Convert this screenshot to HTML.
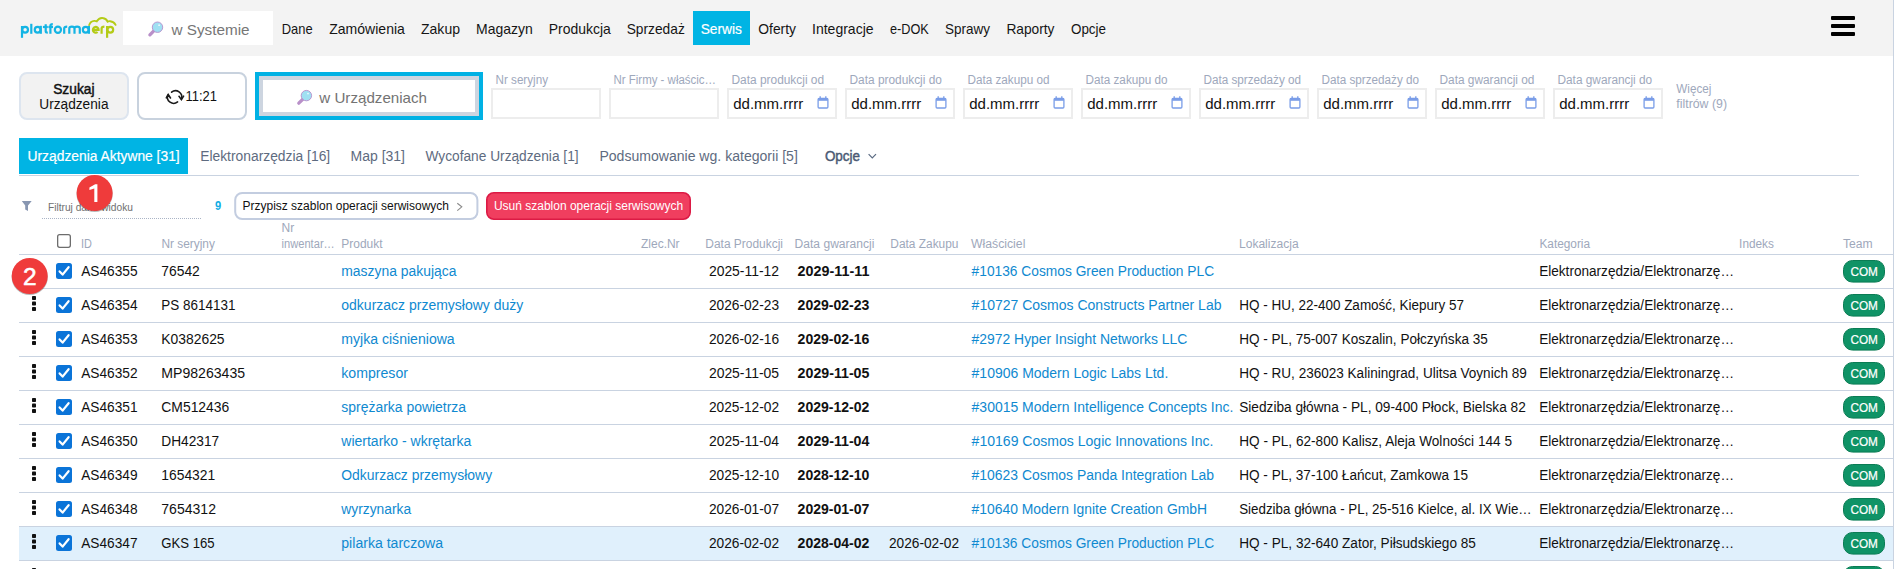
<!DOCTYPE html>
<html><head><meta charset="utf-8"><title>Serwis</title>
<style>html,body{margin:0;padding:0;background:#fff;overflow:hidden}svg{display:block}text{white-space:pre}</style>
</head><body><svg width="1894" height="569" viewBox="0 0 1894 569" font-family="'Liberation Sans', sans-serif"><rect x="0" y="0" width="1894" height="56" fill="#f3f3f3"/>
<g fill="none" stroke-width="2.2" stroke-linecap="butt"><g stroke="#14b4e4"><line x1="22" y1="26" x2="22" y2="37.8"/><circle cx="25.1" cy="29.8" r="2.85"/><line x1="31.3" y1="23.8" x2="31.3" y2="33.8"/><circle cx="37.6" cy="29.8" r="2.85"/><line x1="40.8" y1="25.8" x2="40.8" y2="33.8"/><path d="M45.7 24.2 V31.2 Q45.7 32.6 47.8 32.6"/><line x1="42.9" y1="27" x2="47.8" y2="27"/><path d="M50.4 33.8 V25.8 Q50.4 24.1 52.8 24.1"/><line x1="48.4" y1="27" x2="53" y2="27"/><circle cx="57.9" cy="29.8" r="3.1"/><path d="M64.2 33.8 V28.6 Q64.2 26.6 67.2 26.6"/><path d="M69.3 33.8 V28.4 Q69.3 26.6 71.9 26.6 Q74.5 26.6 74.5 28.4 V33.8 M74.5 28.4 Q74.5 26.6 77.1 26.6 Q79.8 26.6 79.8 28.4 V33.8"/><circle cx="85.7" cy="29.8" r="2.85"/><line x1="88.9" y1="25.8" x2="88.9" y2="33.8"/></g><g stroke="#b4cb16"><path d="M93 29.8 H98.6 A2.85 2.85 0 1 0 97.6 32"/><path d="M101.6 33.8 V28.6 Q101.6 26.6 104.4 26.6"/><line x1="107.1" y1="26" x2="107.1" y2="37.8"/><circle cx="110.3" cy="29.8" r="2.85"/><path d="M89.2 25 Q90.6 21.2 94.2 20.9 Q95.6 20.8 96.8 21.3 Q99 17.6 102.6 18 Q106.3 18.3 107.6 21.6 Q108.6 21 110.2 21.2 Q114 21.6 115.6 24.8" stroke-width="1.9" stroke-linecap="round"/></g></g>
<rect x="123" y="11" width="150" height="34" fill="#ffffff"/>
<line x1="154.3" y1="30.4" x2="149.9" y2="34.8" stroke="#b990c9" stroke-width="3.3" stroke-linecap="round"/>
<circle cx="157.5" cy="27.2" r="5.2" fill="#9fe0f2" stroke="#b58ccb" stroke-width="0.9"/>
<circle cx="159.1" cy="25.2" r="0.9" fill="#ffffff" opacity="0.8"/>
<text x="171.5" y="35" font-size="15" fill="#767676" textLength="78.1" lengthAdjust="spacingAndGlyphs">w Systemie</text>
<text x="281.7" y="34" font-size="15" fill="#151515" textLength="30.9" lengthAdjust="spacingAndGlyphs">Dane</text>
<text x="329.2" y="34" font-size="15" fill="#151515" textLength="75.7" lengthAdjust="spacingAndGlyphs">Zamówienia</text>
<text x="421" y="34" font-size="15" fill="#151515" textLength="39" lengthAdjust="spacingAndGlyphs">Zakup</text>
<text x="476" y="34" font-size="15" fill="#151515" textLength="56.7" lengthAdjust="spacingAndGlyphs">Magazyn</text>
<text x="548.7" y="34" font-size="15" fill="#151515" textLength="62.1" lengthAdjust="spacingAndGlyphs">Produkcja</text>
<text x="626.7" y="34" font-size="15" fill="#151515" textLength="58.1" lengthAdjust="spacingAndGlyphs">Sprzedaż</text>
<rect x="693" y="11" width="57" height="34" fill="#00b4e4"/>
<text x="700.7" y="34" font-size="15" fill="#ffffff" textLength="41.3" lengthAdjust="spacingAndGlyphs" stroke="#ffffff" stroke-width="0.2">Serwis</text>
<text x="758.3" y="34" font-size="15" fill="#151515" textLength="37.7" lengthAdjust="spacingAndGlyphs">Oferty</text>
<text x="812" y="34" font-size="15" fill="#151515" textLength="61.6" lengthAdjust="spacingAndGlyphs">Integracje</text>
<text x="890" y="34" font-size="15" fill="#151515" textLength="38.8" lengthAdjust="spacingAndGlyphs">e-DOK</text>
<text x="945" y="34" font-size="15" fill="#151515" textLength="45" lengthAdjust="spacingAndGlyphs">Sprawy</text>
<text x="1006.4" y="34" font-size="15" fill="#151515" textLength="48.1" lengthAdjust="spacingAndGlyphs">Raporty</text>
<text x="1071" y="34" font-size="15" fill="#151515" textLength="35" lengthAdjust="spacingAndGlyphs">Opcje</text>
<rect x="1831" y="16" width="24" height="4" fill="#000000" rx="1"/>
<rect x="1831" y="24" width="24" height="4" fill="#000000" rx="1"/>
<rect x="1831" y="32" width="24" height="4" fill="#000000" rx="1"/>
<rect x="20" y="73" width="108" height="46" fill="#f2f2f2" stroke="#dde5ef" stroke-width="2" rx="7"/>
<text x="53.2" y="94.3" font-size="14" fill="#111" textLength="41.3" lengthAdjust="spacingAndGlyphs" stroke="#111" stroke-width="0.45">Szukaj</text>
<text x="39.3" y="109" font-size="14" fill="#111" textLength="69.2" lengthAdjust="spacingAndGlyphs">Urządzenia</text>
<rect x="138" y="73" width="108" height="46" fill="#ffffff" stroke="#c8d2de" stroke-width="2" rx="7"/>
<g fill="none" stroke="#1a1a1a" stroke-width="1.6" stroke-linecap="round"><path d="M171.6 92.2 A6.2 6.2 0 0 1 181.4 99"/><path d="M177.6 101.9 A6.2 6.2 0 0 1 167.8 95"/><path d="M179 96.3 L181.4 99.6 L183.6 96.1"/><path d="M166.3 97.8 L168.2 94.6 L170.5 98"/></g>
<text x="185.5" y="101" font-size="14" fill="#111" textLength="31.4" lengthAdjust="spacingAndGlyphs">11:21</text>
<rect x="257" y="74" width="224" height="44" fill="#ffffff" stroke="#00b1e4" stroke-width="4"/>
<rect x="261" y="78" width="216" height="36" fill="none" stroke="#cdd5e0" stroke-width="4"/>
<line x1="303.2" y1="98.8" x2="298.79999999999995" y2="103.19999999999999" stroke="#b990c9" stroke-width="3.3" stroke-linecap="round"/>
<circle cx="306.4" cy="95.6" r="5.2" fill="#9fe0f2" stroke="#b58ccb" stroke-width="0.9"/>
<circle cx="308.0" cy="93.6" r="0.9" fill="#ffffff" opacity="0.8"/>
<text x="319.3" y="102.6" font-size="15" fill="#737373" textLength="107.7" lengthAdjust="spacingAndGlyphs">w Urządzeniach</text>
<text x="495.5" y="84" font-size="12.3" fill="#9ea8bc" textLength="52.5" lengthAdjust="spacingAndGlyphs">Nr seryjny</text>
<rect x="492" y="89" width="108" height="29" fill="#ffffff" stroke="#ededed" stroke-width="2"/>
<text x="613.5" y="84" font-size="12.3" fill="#9ea8bc" textLength="102.5" lengthAdjust="spacingAndGlyphs">Nr Firmy - właścic…</text>
<rect x="610" y="89" width="108" height="29" fill="#ffffff" stroke="#ededed" stroke-width="2"/>
<text x="731.5" y="84" font-size="12.3" fill="#9ea8bc" textLength="92.6" lengthAdjust="spacingAndGlyphs">Data produkcji od</text>
<rect x="728" y="89" width="108" height="29" fill="#ffffff" stroke="#ededed" stroke-width="2"/>
<text x="733.2" y="108.7" font-size="15" fill="#111" textLength="70.1" lengthAdjust="spacingAndGlyphs">dd.mm.rrrr</text>
<g fill="none" stroke="#7a9de8"><rect x="818.1" y="98.4" width="9.8" height="9.6" rx="1" stroke-width="1.3"/><line x1="818.1999999999999" y1="99.6" x2="827.8" y2="99.6" stroke-width="2.4"/><line x1="820.1999999999999" y1="96.2" x2="820.1999999999999" y2="98.4" stroke-width="1.3"/><line x1="825.8" y1="96.2" x2="825.8" y2="98.4" stroke-width="1.3"/></g>
<text x="849.5" y="84" font-size="12.3" fill="#9ea8bc" textLength="92.4" lengthAdjust="spacingAndGlyphs">Data produkcji do</text>
<rect x="846" y="89" width="108" height="29" fill="#ffffff" stroke="#ededed" stroke-width="2"/>
<text x="851.2" y="108.7" font-size="15" fill="#111" textLength="70.1" lengthAdjust="spacingAndGlyphs">dd.mm.rrrr</text>
<g fill="none" stroke="#7a9de8"><rect x="936.1" y="98.4" width="9.8" height="9.6" rx="1" stroke-width="1.3"/><line x1="936.1999999999999" y1="99.6" x2="945.8" y2="99.6" stroke-width="2.4"/><line x1="938.1999999999999" y1="96.2" x2="938.1999999999999" y2="98.4" stroke-width="1.3"/><line x1="943.8" y1="96.2" x2="943.8" y2="98.4" stroke-width="1.3"/></g>
<text x="967.5" y="84" font-size="12.3" fill="#9ea8bc" textLength="82.0" lengthAdjust="spacingAndGlyphs">Data zakupu od</text>
<rect x="964" y="89" width="108" height="29" fill="#ffffff" stroke="#ededed" stroke-width="2"/>
<text x="969.2" y="108.7" font-size="15" fill="#111" textLength="70.1" lengthAdjust="spacingAndGlyphs">dd.mm.rrrr</text>
<g fill="none" stroke="#7a9de8"><rect x="1054.1000000000001" y="98.4" width="9.8" height="9.6" rx="1" stroke-width="1.3"/><line x1="1054.2" y1="99.6" x2="1063.8000000000002" y2="99.6" stroke-width="2.4"/><line x1="1056.2" y1="96.2" x2="1056.2" y2="98.4" stroke-width="1.3"/><line x1="1061.8000000000002" y1="96.2" x2="1061.8000000000002" y2="98.4" stroke-width="1.3"/></g>
<text x="1085.5" y="84" font-size="12.3" fill="#9ea8bc" textLength="82.1" lengthAdjust="spacingAndGlyphs">Data zakupu do</text>
<rect x="1082" y="89" width="108" height="29" fill="#ffffff" stroke="#ededed" stroke-width="2"/>
<text x="1087.2" y="108.7" font-size="15" fill="#111" textLength="70.1" lengthAdjust="spacingAndGlyphs">dd.mm.rrrr</text>
<g fill="none" stroke="#7a9de8"><rect x="1172.1000000000001" y="98.4" width="9.8" height="9.6" rx="1" stroke-width="1.3"/><line x1="1172.2" y1="99.6" x2="1181.8000000000002" y2="99.6" stroke-width="2.4"/><line x1="1174.2" y1="96.2" x2="1174.2" y2="98.4" stroke-width="1.3"/><line x1="1179.8000000000002" y1="96.2" x2="1179.8000000000002" y2="98.4" stroke-width="1.3"/></g>
<text x="1203.5" y="84" font-size="12.3" fill="#9ea8bc" textLength="97.6" lengthAdjust="spacingAndGlyphs">Data sprzedaży od</text>
<rect x="1200" y="89" width="108" height="29" fill="#ffffff" stroke="#ededed" stroke-width="2"/>
<text x="1205.2" y="108.7" font-size="15" fill="#111" textLength="70.1" lengthAdjust="spacingAndGlyphs">dd.mm.rrrr</text>
<g fill="none" stroke="#7a9de8"><rect x="1290.1000000000001" y="98.4" width="9.8" height="9.6" rx="1" stroke-width="1.3"/><line x1="1290.2" y1="99.6" x2="1299.8000000000002" y2="99.6" stroke-width="2.4"/><line x1="1292.2" y1="96.2" x2="1292.2" y2="98.4" stroke-width="1.3"/><line x1="1297.8000000000002" y1="96.2" x2="1297.8000000000002" y2="98.4" stroke-width="1.3"/></g>
<text x="1321.5" y="84" font-size="12.3" fill="#9ea8bc" textLength="97.5" lengthAdjust="spacingAndGlyphs">Data sprzedaży do</text>
<rect x="1318" y="89" width="108" height="29" fill="#ffffff" stroke="#ededed" stroke-width="2"/>
<text x="1323.2" y="108.7" font-size="15" fill="#111" textLength="70.1" lengthAdjust="spacingAndGlyphs">dd.mm.rrrr</text>
<g fill="none" stroke="#7a9de8"><rect x="1408.1000000000001" y="98.4" width="9.8" height="9.6" rx="1" stroke-width="1.3"/><line x1="1408.2" y1="99.6" x2="1417.8000000000002" y2="99.6" stroke-width="2.4"/><line x1="1410.2" y1="96.2" x2="1410.2" y2="98.4" stroke-width="1.3"/><line x1="1415.8000000000002" y1="96.2" x2="1415.8000000000002" y2="98.4" stroke-width="1.3"/></g>
<text x="1439.5" y="84" font-size="12.3" fill="#9ea8bc" textLength="94.9" lengthAdjust="spacingAndGlyphs">Data gwarancji od</text>
<rect x="1436" y="89" width="108" height="29" fill="#ffffff" stroke="#ededed" stroke-width="2"/>
<text x="1441.2" y="108.7" font-size="15" fill="#111" textLength="70.1" lengthAdjust="spacingAndGlyphs">dd.mm.rrrr</text>
<g fill="none" stroke="#7a9de8"><rect x="1526.1000000000001" y="98.4" width="9.8" height="9.6" rx="1" stroke-width="1.3"/><line x1="1526.2" y1="99.6" x2="1535.8000000000002" y2="99.6" stroke-width="2.4"/><line x1="1528.2" y1="96.2" x2="1528.2" y2="98.4" stroke-width="1.3"/><line x1="1533.8000000000002" y1="96.2" x2="1533.8000000000002" y2="98.4" stroke-width="1.3"/></g>
<text x="1557.5" y="84" font-size="12.3" fill="#9ea8bc" textLength="94.7" lengthAdjust="spacingAndGlyphs">Data gwarancji do</text>
<rect x="1554" y="89" width="108" height="29" fill="#ffffff" stroke="#ededed" stroke-width="2"/>
<text x="1559.2" y="108.7" font-size="15" fill="#111" textLength="70.1" lengthAdjust="spacingAndGlyphs">dd.mm.rrrr</text>
<g fill="none" stroke="#7a9de8"><rect x="1644.1000000000001" y="98.4" width="9.8" height="9.6" rx="1" stroke-width="1.3"/><line x1="1644.2" y1="99.6" x2="1653.8000000000002" y2="99.6" stroke-width="2.4"/><line x1="1646.2" y1="96.2" x2="1646.2" y2="98.4" stroke-width="1.3"/><line x1="1651.8000000000002" y1="96.2" x2="1651.8000000000002" y2="98.4" stroke-width="1.3"/></g>
<text x="1676.3" y="92.5" font-size="12.3" fill="#9ea8bc" textLength="35.0" lengthAdjust="spacingAndGlyphs">Więcej</text>
<text x="1676.3" y="107.7" font-size="12.3" fill="#9ea8bc" textLength="50.7" lengthAdjust="spacingAndGlyphs">filtrów (9)</text>
<rect x="19" y="138" width="169" height="36" fill="#00b4e4"/>
<text x="27.5" y="161" font-size="14" fill="#ffffff" textLength="152.2" lengthAdjust="spacingAndGlyphs" stroke="#ffffff" stroke-width="0.2">Urządzenia Aktywne [31]</text>
<text x="200.2" y="161" font-size="14" fill="#5e6b80" textLength="130.0" lengthAdjust="spacingAndGlyphs">Elektronarzędzia [16]</text>
<text x="350.5" y="161" font-size="14" fill="#5e6b80" textLength="54.5" lengthAdjust="spacingAndGlyphs">Map [31]</text>
<text x="425.5" y="161" font-size="14" fill="#5e6b80" textLength="153.1" lengthAdjust="spacingAndGlyphs">Wycofane Urządzenia [1]</text>
<text x="599.4" y="161" font-size="14" fill="#5e6b80" textLength="198.4" lengthAdjust="spacingAndGlyphs">Podsumowanie wg. kategorii [5]</text>
<text x="824.9" y="161" font-size="14" fill="#4a5a74" textLength="35.1" lengthAdjust="spacingAndGlyphs" stroke="#4a5a74" stroke-width="0.45">Opcje</text>
<path d="M868.6 154.2 L872.3 158 L876 154.2" fill="none" stroke="#5a6a82" stroke-width="1.2"/>
<rect x="19" y="175" width="1840" height="1" fill="#c9d3e1"/>
<path d="M21.8 201 L31.7 201 L28 205.5 L28 211 L25.2 209.5 L25.2 205.5 Z" fill="#8897b2"/>
<text x="47.9" y="211" font-size="10" fill="#707070" textLength="85.1" lengthAdjust="spacingAndGlyphs">Filtruj dane widoku</text>
<line x1="42" y1="218.5" x2="201" y2="218.5" stroke="#aab4c6" stroke-width="1" stroke-dasharray="1 1"/>
<text x="215" y="210" font-size="12.5" fill="#12ade4" font-weight="700" textLength="6.2" lengthAdjust="spacingAndGlyphs">9</text>
<rect x="235.2" y="193" width="242.2" height="26" fill="#ffffff" stroke="#c3cde0" stroke-width="2" rx="7"/>
<text x="242.5" y="210" font-size="12.5" fill="#111" textLength="206.5" lengthAdjust="spacingAndGlyphs">Przypisz szablon operacji serwisowych</text>
<path d="M457.3 203.2 L461.8 206.8 L457.3 210.6" fill="none" stroke="#8a8a8a" stroke-width="1.1"/>
<rect x="486.8" y="192.8" width="203.4" height="26.4" fill="#f03e5f" stroke="#dc1a45" stroke-width="1.6" rx="7"/>
<text x="493.9" y="210" font-size="12.5" fill="#ffffff" textLength="189.3" lengthAdjust="spacingAndGlyphs">Usuń szablon operacji serwisowych</text>
<rect x="57.65" y="234.65" width="12.7" height="12.7" fill="#ffffff" stroke="#6d6d6d" stroke-width="1.3" rx="2"/>
<text x="81.1" y="248" font-size="12" fill="#9ea8bb" textLength="10.9" lengthAdjust="spacingAndGlyphs">ID</text>
<text x="161.4" y="248" font-size="12" fill="#9ea8bb" textLength="53.5" lengthAdjust="spacingAndGlyphs">Nr seryjny</text>
<text x="281.6" y="248" font-size="12" fill="#9ea8bb" textLength="53.1" lengthAdjust="spacingAndGlyphs">inwentar…</text>
<text x="341.3" y="248" font-size="12" fill="#9ea8bb" textLength="41.3" lengthAdjust="spacingAndGlyphs">Produkt</text>
<text x="641" y="248" font-size="12" fill="#9ea8bb" textLength="38.6" lengthAdjust="spacingAndGlyphs">Zlec.Nr</text>
<text x="705.3" y="248" font-size="12" fill="#9ea8bb" textLength="77.7" lengthAdjust="spacingAndGlyphs">Data Produkcji</text>
<text x="794.6" y="248" font-size="12" fill="#9ea8bb" textLength="79.8" lengthAdjust="spacingAndGlyphs">Data gwarancji</text>
<text x="890.3" y="248" font-size="12" fill="#9ea8bb" textLength="68.2" lengthAdjust="spacingAndGlyphs">Data Zakupu</text>
<text x="970.9" y="248" font-size="12" fill="#9ea8bb" textLength="54.5" lengthAdjust="spacingAndGlyphs">Właściciel</text>
<text x="1239" y="248" font-size="12" fill="#9ea8bb" textLength="59.6" lengthAdjust="spacingAndGlyphs">Lokalizacja</text>
<text x="1539.4" y="248" font-size="12" fill="#9ea8bb" textLength="50.7" lengthAdjust="spacingAndGlyphs">Kategoria</text>
<text x="1739.1" y="248" font-size="12" fill="#9ea8bb" textLength="34.8" lengthAdjust="spacingAndGlyphs">Indeks</text>
<text x="1843" y="248" font-size="12" fill="#9ea8bb" textLength="29.7" lengthAdjust="spacingAndGlyphs">Team</text>
<text x="281.6" y="232" font-size="12" fill="#9ea8bb">Nr</text>
<rect x="19" y="254" width="1874" height="1" fill="#c9d3e1"/>
<rect x="56" y="263" width="16" height="16" fill="#0b74d8" rx="2.5"/>
<path d="M59.6 271.4 L62.6 274.6 L68.6 267.2" fill="none" stroke="#ffffff" stroke-width="2.2" stroke-linecap="round" stroke-linejoin="round"/>
<text x="81.2" y="276" font-size="14" fill="#111" textLength="56.4" lengthAdjust="spacingAndGlyphs">AS46355</text>
<text x="161.3" y="276" font-size="14" fill="#111" textLength="38.5" lengthAdjust="spacingAndGlyphs">76542</text>
<text x="341.3" y="276" font-size="14" fill="#0f89d0" textLength="115.1" lengthAdjust="spacingAndGlyphs">maszyna pakująca</text>
<text x="708.9" y="276" font-size="14" fill="#111" textLength="70.2" lengthAdjust="spacingAndGlyphs">2025-11-12</text>
<text x="797.6" y="276" font-size="14" fill="#111" font-weight="700" textLength="71.8" lengthAdjust="spacingAndGlyphs">2029-11-11</text>
<text x="971.6" y="276" font-size="14" fill="#0f89d0" textLength="242.5" lengthAdjust="spacingAndGlyphs">#10136 Cosmos Green Production PLC</text>
<text x="1539.2" y="276" font-size="14" fill="#111" textLength="194.8" lengthAdjust="spacingAndGlyphs">Elektronarzędzia/Elektronarzę…</text>
<rect x="1843.5" y="260.5" width="41" height="21.6" fill="#0f9366" stroke="#0a7c54" stroke-width="1" rx="9"/>
<text x="1850.4" y="276" font-size="13" fill="#ffffff" textLength="27.5" lengthAdjust="spacingAndGlyphs" stroke="#ffffff" stroke-width="0.2">COM</text>
<rect x="19" y="288" width="1874" height="1" fill="#c9d3e1"/>
<rect x="32" y="296" width="4" height="4" fill="#111" rx="0.8"/>
<rect x="32" y="301.5" width="4" height="4" fill="#111" rx="0.8"/>
<rect x="32" y="307" width="4" height="4" fill="#111" rx="0.8"/>
<rect x="56" y="297" width="16" height="16" fill="#0b74d8" rx="2.5"/>
<path d="M59.6 305.4 L62.6 308.6 L68.6 301.2" fill="none" stroke="#ffffff" stroke-width="2.2" stroke-linecap="round" stroke-linejoin="round"/>
<text x="81.2" y="310" font-size="14" fill="#111" textLength="56.4" lengthAdjust="spacingAndGlyphs">AS46354</text>
<text x="161.3" y="310" font-size="14" fill="#111" textLength="74.1" lengthAdjust="spacingAndGlyphs">PS 8614131</text>
<text x="341.3" y="310" font-size="14" fill="#0f89d0" textLength="182.0" lengthAdjust="spacingAndGlyphs">odkurzacz przemysłowy duży</text>
<text x="708.9" y="310" font-size="14" fill="#111" textLength="70.2" lengthAdjust="spacingAndGlyphs">2026-02-23</text>
<text x="797.6" y="310" font-size="14" fill="#111" font-weight="700" textLength="71.8" lengthAdjust="spacingAndGlyphs">2029-02-23</text>
<text x="971.6" y="310" font-size="14" fill="#0f89d0" textLength="249.9" lengthAdjust="spacingAndGlyphs">#10727 Cosmos Constructs Partner Lab</text>
<text x="1239.2" y="310" font-size="14" fill="#111" textLength="224.9" lengthAdjust="spacingAndGlyphs">HQ - HU, 22-400 Zamość, Kiepury 57</text>
<text x="1539.2" y="310" font-size="14" fill="#111" textLength="194.8" lengthAdjust="spacingAndGlyphs">Elektronarzędzia/Elektronarzę…</text>
<rect x="1843.5" y="294.5" width="41" height="21.6" fill="#0f9366" stroke="#0a7c54" stroke-width="1" rx="9"/>
<text x="1850.4" y="310" font-size="13" fill="#ffffff" textLength="27.5" lengthAdjust="spacingAndGlyphs" stroke="#ffffff" stroke-width="0.2">COM</text>
<rect x="19" y="322" width="1874" height="1" fill="#c9d3e1"/>
<rect x="32" y="330" width="4" height="4" fill="#111" rx="0.8"/>
<rect x="32" y="335.5" width="4" height="4" fill="#111" rx="0.8"/>
<rect x="32" y="341" width="4" height="4" fill="#111" rx="0.8"/>
<rect x="56" y="331" width="16" height="16" fill="#0b74d8" rx="2.5"/>
<path d="M59.6 339.4 L62.6 342.6 L68.6 335.2" fill="none" stroke="#ffffff" stroke-width="2.2" stroke-linecap="round" stroke-linejoin="round"/>
<text x="81.2" y="344" font-size="14" fill="#111" textLength="56.4" lengthAdjust="spacingAndGlyphs">AS46353</text>
<text x="161.3" y="344" font-size="14" fill="#111" textLength="63.3" lengthAdjust="spacingAndGlyphs">K0382625</text>
<text x="341.3" y="344" font-size="14" fill="#0f89d0" textLength="113.4" lengthAdjust="spacingAndGlyphs">myjka ciśnieniowa</text>
<text x="708.9" y="344" font-size="14" fill="#111" textLength="70.2" lengthAdjust="spacingAndGlyphs">2026-02-16</text>
<text x="797.6" y="344" font-size="14" fill="#111" font-weight="700" textLength="71.8" lengthAdjust="spacingAndGlyphs">2029-02-16</text>
<text x="971.6" y="344" font-size="14" fill="#0f89d0" textLength="215.6" lengthAdjust="spacingAndGlyphs">#2972 Hyper Insight Networks LLC</text>
<text x="1239.2" y="344" font-size="14" fill="#111" textLength="248.6" lengthAdjust="spacingAndGlyphs">HQ - PL, 75-007 Koszalin, Połczyńska 35</text>
<text x="1539.2" y="344" font-size="14" fill="#111" textLength="194.8" lengthAdjust="spacingAndGlyphs">Elektronarzędzia/Elektronarzę…</text>
<rect x="1843.5" y="328.5" width="41" height="21.6" fill="#0f9366" stroke="#0a7c54" stroke-width="1" rx="9"/>
<text x="1850.4" y="344" font-size="13" fill="#ffffff" textLength="27.5" lengthAdjust="spacingAndGlyphs" stroke="#ffffff" stroke-width="0.2">COM</text>
<rect x="19" y="356" width="1874" height="1" fill="#c9d3e1"/>
<rect x="32" y="364" width="4" height="4" fill="#111" rx="0.8"/>
<rect x="32" y="369.5" width="4" height="4" fill="#111" rx="0.8"/>
<rect x="32" y="375" width="4" height="4" fill="#111" rx="0.8"/>
<rect x="56" y="365" width="16" height="16" fill="#0b74d8" rx="2.5"/>
<path d="M59.6 373.4 L62.6 376.6 L68.6 369.2" fill="none" stroke="#ffffff" stroke-width="2.2" stroke-linecap="round" stroke-linejoin="round"/>
<text x="81.2" y="378" font-size="14" fill="#111" textLength="56.4" lengthAdjust="spacingAndGlyphs">AS46352</text>
<text x="161.3" y="378" font-size="14" fill="#111" textLength="83.8" lengthAdjust="spacingAndGlyphs">MP98263435</text>
<text x="341.3" y="378" font-size="14" fill="#0f89d0" textLength="66.7" lengthAdjust="spacingAndGlyphs">kompresor</text>
<text x="708.9" y="378" font-size="14" fill="#111" textLength="70.2" lengthAdjust="spacingAndGlyphs">2025-11-05</text>
<text x="797.6" y="378" font-size="14" fill="#111" font-weight="700" textLength="71.8" lengthAdjust="spacingAndGlyphs">2029-11-05</text>
<text x="971.6" y="378" font-size="14" fill="#0f89d0" textLength="196.7" lengthAdjust="spacingAndGlyphs">#10906 Modern Logic Labs Ltd.</text>
<text x="1239.2" y="378" font-size="14" fill="#111" textLength="287.6" lengthAdjust="spacingAndGlyphs">HQ - RU, 236023 Kaliningrad, Ulitsa Voynich 89</text>
<text x="1539.2" y="378" font-size="14" fill="#111" textLength="194.8" lengthAdjust="spacingAndGlyphs">Elektronarzędzia/Elektronarzę…</text>
<rect x="1843.5" y="362.5" width="41" height="21.6" fill="#0f9366" stroke="#0a7c54" stroke-width="1" rx="9"/>
<text x="1850.4" y="378" font-size="13" fill="#ffffff" textLength="27.5" lengthAdjust="spacingAndGlyphs" stroke="#ffffff" stroke-width="0.2">COM</text>
<rect x="19" y="390" width="1874" height="1" fill="#c9d3e1"/>
<rect x="32" y="398" width="4" height="4" fill="#111" rx="0.8"/>
<rect x="32" y="403.5" width="4" height="4" fill="#111" rx="0.8"/>
<rect x="32" y="409" width="4" height="4" fill="#111" rx="0.8"/>
<rect x="56" y="399" width="16" height="16" fill="#0b74d8" rx="2.5"/>
<path d="M59.6 407.4 L62.6 410.6 L68.6 403.2" fill="none" stroke="#ffffff" stroke-width="2.2" stroke-linecap="round" stroke-linejoin="round"/>
<text x="81.2" y="412" font-size="14" fill="#111" textLength="56.4" lengthAdjust="spacingAndGlyphs">AS46351</text>
<text x="161.3" y="412" font-size="14" fill="#111" textLength="68.0" lengthAdjust="spacingAndGlyphs">CM512436</text>
<text x="341.3" y="412" font-size="14" fill="#0f89d0" textLength="124.8" lengthAdjust="spacingAndGlyphs">sprężarka powietrza</text>
<text x="708.9" y="412" font-size="14" fill="#111" textLength="70.2" lengthAdjust="spacingAndGlyphs">2025-12-02</text>
<text x="797.6" y="412" font-size="14" fill="#111" font-weight="700" textLength="71.8" lengthAdjust="spacingAndGlyphs">2029-12-02</text>
<text x="971.6" y="412" font-size="14" fill="#0f89d0" textLength="261.8" lengthAdjust="spacingAndGlyphs">#30015 Modern Intelligence Concepts Inc.</text>
<text x="1239.2" y="412" font-size="14" fill="#111" textLength="286.6" lengthAdjust="spacingAndGlyphs">Siedziba główna - PL, 09-400 Płock, Bielska 82</text>
<text x="1539.2" y="412" font-size="14" fill="#111" textLength="194.8" lengthAdjust="spacingAndGlyphs">Elektronarzędzia/Elektronarzę…</text>
<rect x="1843.5" y="396.5" width="41" height="21.6" fill="#0f9366" stroke="#0a7c54" stroke-width="1" rx="9"/>
<text x="1850.4" y="412" font-size="13" fill="#ffffff" textLength="27.5" lengthAdjust="spacingAndGlyphs" stroke="#ffffff" stroke-width="0.2">COM</text>
<rect x="19" y="424" width="1874" height="1" fill="#c9d3e1"/>
<rect x="32" y="432" width="4" height="4" fill="#111" rx="0.8"/>
<rect x="32" y="437.5" width="4" height="4" fill="#111" rx="0.8"/>
<rect x="32" y="443" width="4" height="4" fill="#111" rx="0.8"/>
<rect x="56" y="433" width="16" height="16" fill="#0b74d8" rx="2.5"/>
<path d="M59.6 441.4 L62.6 444.6 L68.6 437.2" fill="none" stroke="#ffffff" stroke-width="2.2" stroke-linecap="round" stroke-linejoin="round"/>
<text x="81.2" y="446" font-size="14" fill="#111" textLength="56.3" lengthAdjust="spacingAndGlyphs">AS46350</text>
<text x="161.3" y="446" font-size="14" fill="#111" textLength="57.9" lengthAdjust="spacingAndGlyphs">DH42317</text>
<text x="341.3" y="446" font-size="14" fill="#0f89d0" textLength="130.0" lengthAdjust="spacingAndGlyphs">wiertarko - wkrętarka</text>
<text x="708.9" y="446" font-size="14" fill="#111" textLength="70.2" lengthAdjust="spacingAndGlyphs">2025-11-04</text>
<text x="797.6" y="446" font-size="14" fill="#111" font-weight="700" textLength="71.8" lengthAdjust="spacingAndGlyphs">2029-11-04</text>
<text x="971.6" y="446" font-size="14" fill="#0f89d0" textLength="241.9" lengthAdjust="spacingAndGlyphs">#10169 Cosmos Logic Innovations Inc.</text>
<text x="1239.2" y="446" font-size="14" fill="#111" textLength="272.8" lengthAdjust="spacingAndGlyphs">HQ - PL, 62-800 Kalisz, Aleja Wolności 144 5</text>
<text x="1539.2" y="446" font-size="14" fill="#111" textLength="194.8" lengthAdjust="spacingAndGlyphs">Elektronarzędzia/Elektronarzę…</text>
<rect x="1843.5" y="430.5" width="41" height="21.6" fill="#0f9366" stroke="#0a7c54" stroke-width="1" rx="9"/>
<text x="1850.4" y="446" font-size="13" fill="#ffffff" textLength="27.5" lengthAdjust="spacingAndGlyphs" stroke="#ffffff" stroke-width="0.2">COM</text>
<rect x="19" y="458" width="1874" height="1" fill="#c9d3e1"/>
<rect x="32" y="466" width="4" height="4" fill="#111" rx="0.8"/>
<rect x="32" y="471.5" width="4" height="4" fill="#111" rx="0.8"/>
<rect x="32" y="477" width="4" height="4" fill="#111" rx="0.8"/>
<rect x="56" y="467" width="16" height="16" fill="#0b74d8" rx="2.5"/>
<path d="M59.6 475.4 L62.6 478.6 L68.6 471.2" fill="none" stroke="#ffffff" stroke-width="2.2" stroke-linecap="round" stroke-linejoin="round"/>
<text x="81.2" y="480" font-size="14" fill="#111" textLength="56.3" lengthAdjust="spacingAndGlyphs">AS46349</text>
<text x="161.3" y="480" font-size="14" fill="#111" textLength="53.9" lengthAdjust="spacingAndGlyphs">1654321</text>
<text x="341.3" y="480" font-size="14" fill="#0f89d0" textLength="150.8" lengthAdjust="spacingAndGlyphs">Odkurzacz przemysłowy</text>
<text x="708.9" y="480" font-size="14" fill="#111" textLength="70.2" lengthAdjust="spacingAndGlyphs">2025-12-10</text>
<text x="797.6" y="480" font-size="14" fill="#111" font-weight="700" textLength="71.8" lengthAdjust="spacingAndGlyphs">2028-12-10</text>
<text x="971.6" y="480" font-size="14" fill="#0f89d0" textLength="242.4" lengthAdjust="spacingAndGlyphs">#10623 Cosmos Panda Integration Lab</text>
<text x="1239.2" y="480" font-size="14" fill="#111" textLength="228.8" lengthAdjust="spacingAndGlyphs">HQ - PL, 37-100 Łańcut, Zamkowa 15</text>
<text x="1539.2" y="480" font-size="14" fill="#111" textLength="194.8" lengthAdjust="spacingAndGlyphs">Elektronarzędzia/Elektronarzę…</text>
<rect x="1843.5" y="464.5" width="41" height="21.6" fill="#0f9366" stroke="#0a7c54" stroke-width="1" rx="9"/>
<text x="1850.4" y="480" font-size="13" fill="#ffffff" textLength="27.5" lengthAdjust="spacingAndGlyphs" stroke="#ffffff" stroke-width="0.2">COM</text>
<rect x="19" y="492" width="1874" height="1" fill="#c9d3e1"/>
<rect x="32" y="500" width="4" height="4" fill="#111" rx="0.8"/>
<rect x="32" y="505.5" width="4" height="4" fill="#111" rx="0.8"/>
<rect x="32" y="511" width="4" height="4" fill="#111" rx="0.8"/>
<rect x="56" y="501" width="16" height="16" fill="#0b74d8" rx="2.5"/>
<path d="M59.6 509.4 L62.6 512.6 L68.6 505.2" fill="none" stroke="#ffffff" stroke-width="2.2" stroke-linecap="round" stroke-linejoin="round"/>
<text x="81.2" y="514" font-size="14" fill="#111" textLength="56.3" lengthAdjust="spacingAndGlyphs">AS46348</text>
<text x="161.3" y="514" font-size="14" fill="#111" textLength="54.7" lengthAdjust="spacingAndGlyphs">7654312</text>
<text x="341.3" y="514" font-size="14" fill="#0f89d0" textLength="69.8" lengthAdjust="spacingAndGlyphs">wyrzynarka</text>
<text x="708.9" y="514" font-size="14" fill="#111" textLength="70.2" lengthAdjust="spacingAndGlyphs">2026-01-07</text>
<text x="797.6" y="514" font-size="14" fill="#111" font-weight="700" textLength="71.8" lengthAdjust="spacingAndGlyphs">2029-01-07</text>
<text x="971.6" y="514" font-size="14" fill="#0f89d0" textLength="235.4" lengthAdjust="spacingAndGlyphs">#10640 Modern Ignite Creation GmbH</text>
<text x="1239.2" y="514" font-size="14" fill="#111" textLength="292.5" lengthAdjust="spacingAndGlyphs">Siedziba główna - PL, 25-516 Kielce, al. IX Wie…</text>
<text x="1539.2" y="514" font-size="14" fill="#111" textLength="194.8" lengthAdjust="spacingAndGlyphs">Elektronarzędzia/Elektronarzę…</text>
<rect x="1843.5" y="498.5" width="41" height="21.6" fill="#0f9366" stroke="#0a7c54" stroke-width="1" rx="9"/>
<text x="1850.4" y="514" font-size="13" fill="#ffffff" textLength="27.5" lengthAdjust="spacingAndGlyphs" stroke="#ffffff" stroke-width="0.2">COM</text>
<rect x="19" y="526" width="1874" height="1" fill="#c9d3e1"/>
<rect x="19" y="527" width="1874" height="33" fill="#e0f0fc"/>
<rect x="32" y="534" width="4" height="4" fill="#111" rx="0.8"/>
<rect x="32" y="539.5" width="4" height="4" fill="#111" rx="0.8"/>
<rect x="32" y="545" width="4" height="4" fill="#111" rx="0.8"/>
<rect x="56" y="535" width="16" height="16" fill="#0b74d8" rx="2.5"/>
<path d="M59.6 543.4 L62.6 546.6 L68.6 539.2" fill="none" stroke="#ffffff" stroke-width="2.2" stroke-linecap="round" stroke-linejoin="round"/>
<text x="81.2" y="548" font-size="14" fill="#111" textLength="56.3" lengthAdjust="spacingAndGlyphs">AS46347</text>
<text x="161.3" y="548" font-size="14" fill="#111" textLength="53.4" lengthAdjust="spacingAndGlyphs">GKS 165</text>
<text x="341.3" y="548" font-size="14" fill="#0f89d0" textLength="101.7" lengthAdjust="spacingAndGlyphs">pilarka tarczowa</text>
<text x="708.9" y="548" font-size="14" fill="#111" textLength="70.2" lengthAdjust="spacingAndGlyphs">2026-02-02</text>
<text x="797.6" y="548" font-size="14" fill="#111" font-weight="700" textLength="71.8" lengthAdjust="spacingAndGlyphs">2028-04-02</text>
<text x="889" y="548" font-size="14" fill="#111" textLength="70" lengthAdjust="spacingAndGlyphs">2026-02-02</text>
<text x="971.6" y="548" font-size="14" fill="#0f89d0" textLength="242.5" lengthAdjust="spacingAndGlyphs">#10136 Cosmos Green Production PLC</text>
<text x="1239.2" y="548" font-size="14" fill="#111" textLength="236.7" lengthAdjust="spacingAndGlyphs">HQ - PL, 32-640 Zator, Piłsudskiego 85</text>
<text x="1539.2" y="548" font-size="14" fill="#111" textLength="194.8" lengthAdjust="spacingAndGlyphs">Elektronarzędzia/Elektronarzę…</text>
<rect x="1843.5" y="532.5" width="41" height="21.6" fill="#0f9366" stroke="#0a7c54" stroke-width="1" rx="9"/>
<text x="1850.4" y="548" font-size="13" fill="#ffffff" textLength="27.5" lengthAdjust="spacingAndGlyphs" stroke="#ffffff" stroke-width="0.2">COM</text>
<rect x="19" y="560" width="1874" height="1" fill="#c9d3e1"/>
<rect x="32" y="568" width="4" height="4" fill="#111" rx="0.8"/>
<rect x="56" y="569" width="16" height="16" fill="#0b74d8" rx="2.5"/>
<rect x="1843.5" y="566.5" width="41" height="21.6" fill="#0f9366" stroke="#0a7c54" stroke-width="1" rx="9"/>
<rect x="1893" y="0" width="1" height="569" fill="#c9d3e1"/>
<circle cx="94.6" cy="194" r="18.1" fill="#000" opacity="0.28"/>
<circle cx="94.6" cy="193" r="18" fill="#ef3b3b"/>
<path d="M89.39999999999999 187.4 L95.19999999999999 184.2 L97.39999999999999 184.2 L97.39999999999999 202 L94.3 202 L94.3 188.4 L89.39999999999999 190.1 Z" fill="#ffffff"/>
<circle cx="29.7" cy="277" r="18.1" fill="#000" opacity="0.28"/>
<circle cx="29.7" cy="276" r="18" fill="#ef3b3b"/>
<text x="29.7" y="284.9" font-size="24.5" fill="#ffffff" text-anchor="middle" stroke="#ffffff" stroke-width="0.55">2</text></svg></body></html>
